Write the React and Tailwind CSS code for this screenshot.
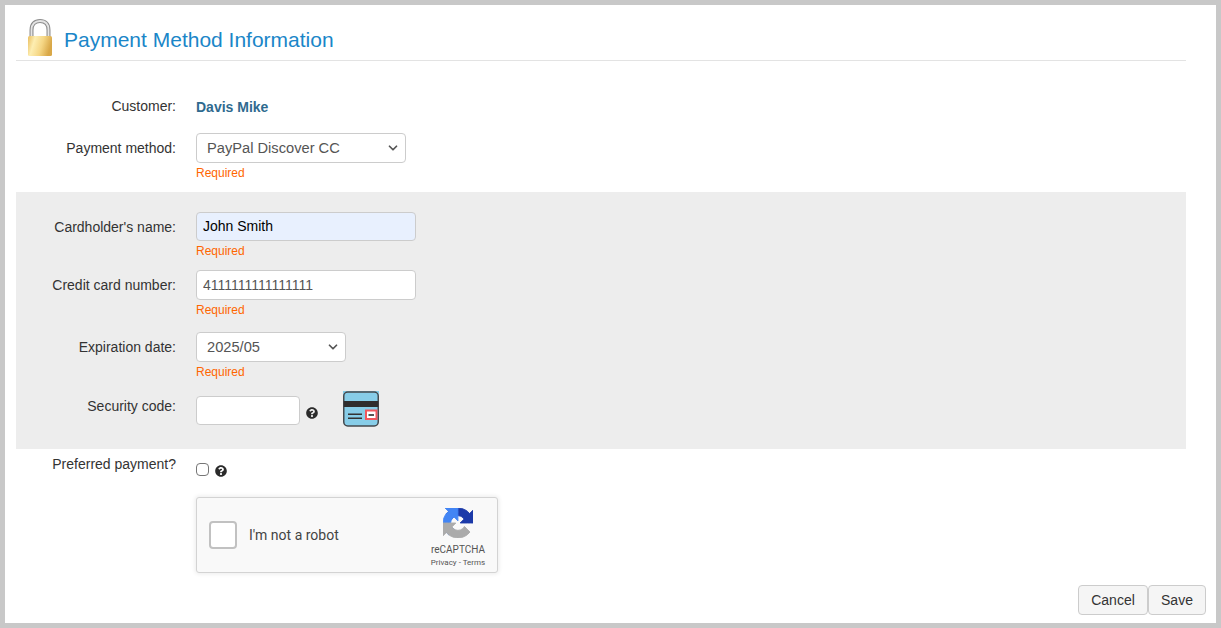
import { ChevronDown } from "lucide-react";
import { FaQuestionCircle } from "react-icons/fa";

const font = { fontFamily: '"Liberation Sans", Arial, sans-serif' };

function Lock() {
  return (
    <svg width="26" height="38" viewBox="0 0 26 38" className="shrink-0">
      <defs>
        <linearGradient id="lockBody" x1="0" y1="0" x2="1" y2="0.25">
          <stop offset="0" stopColor="#e9bd5e" />
          <stop offset="0.3" stopColor="#fdeeb2" />
          <stop offset="0.65" stopColor="#f5d684" />
          <stop offset="1" stopColor="#d9a848" />
        </linearGradient>
      </defs>
      <path d="M4.500 18V11C4.500 5 8 2 13 2s8.500 3 8.500 9v7" fill="none" stroke="#8d8d8d" strokeWidth="4" />
      <path d="M4.500 18V11C4.500 5 8 2 13 2s8.500 3 8.500 9v7" fill="none" stroke="#e4e4e4" strokeWidth="1.800" />
      <rect x="1" y="17" width="24" height="20" rx="1.500" fill="url(#lockBody)" />
    </svg>
  );
}

function Help() {
  return <FaQuestionCircle size={12} className="text-[#2b2b2b]" />;
}

function CardIcon() {
  return (
    <svg width="36" height="36" viewBox="0 0 36 36" className="shrink-0">
      <rect width="36" height="12" fill="#87cde8" />
      <rect x="0.750" y="1" width="34.500" height="34" rx="4" fill="#87cde8" stroke="#454a4e" strokeWidth="1.500" />
      <rect x="0.750" y="10" width="34.500" height="6" fill="#2f2d2d" />
      <rect x="5" y="22.500" width="14" height="1.500" fill="#333" />
      <rect x="5" y="26.500" width="14" height="1.500" fill="#333" />
      <rect x="23" y="19.500" width="10.500" height="8.500" fill="#fff" stroke="#f0565c" strokeWidth="2" />
      <rect x="25.500" y="23" width="5.500" height="2" fill="#555" />
    </svg>
  );
}

function RecaptchaLogo() {
  return (
    <svg width="30" height="30" viewBox="0 0 64 64">
      <path d="M64 31.955l-.033-1.37V4.687l-7.16 7.16C50.948 4.674 42.033.093 32.05.093c-10.4 0-19.622 4.96-25.458 12.64l11.736 11.86a15.55 15.55 0 0 1 4.754-5.334c2.05-1.6 4.952-2.906 8.968-2.906.485 0 .86.057 1.135.163 4.976.393 9.29 3.14 11.83 7.124l-8.307 8.307c10.522-.04 22.41-.066 27.295 0" fill="#1c3aa9" stroke="#1c3aa9" strokeWidth="2" />
      <path d="M31.862.094l-1.37.033H4.594l7.16 7.16C4.58 13.147 0 22.06 0 32.046c0 10.4 4.96 19.622 12.64 25.458l11.86-11.736a15.55 15.55 0 0 1-5.334-4.754c-1.6-2.05-2.906-4.952-2.906-8.968 0-.485.057-.86.163-1.135.393-4.976 3.14-9.29 7.124-11.83l8.307 8.307c-.04-10.522-.066-22.41 0-27.295" fill="#4285f4" stroke="#4285f4" strokeWidth="2" />
      <path d="M.001 32.045l.033 1.37v25.898l7.16-7.160c5.86 7.173 14.774 11.754 24.76 11.754 10.4 0 19.622-4.96 25.458-12.64l-11.736-11.86a15.55 15.55 0 0 1-4.754 5.334c-2.05 1.6-4.952 2.906-8.968 2.906-.485 0-.86-.057-1.135-.163-4.976-.393-9.29-3.14-11.83-7.124l8.307-8.307c-10.522.04-22.41.066-27.295 0" fill="#ababab" stroke="#ababab" strokeWidth="2" />
    </svg>
  );
}

function Row({ label, children, className = "", labelClass = "" }) {
  return (
    <div className={`grid grid-cols-[160px_1fr] gap-x-5 ${className}`}>
      <div className={`text-right text-sm text-[#333] ${labelClass}`}>{label}</div>
      <div>{children}</div>
    </div>
  );
}

function Required() {
  return <div className="mt-[3px] text-xs leading-[14px] text-[#ff6600]">Required</div>;
}

function Select({ value, width }) {
  return (
    <div className={`relative h-[30px] rounded border border-[#ccc] bg-white ${width}`}>
      <select
        defaultValue={value}
        className="h-full w-full appearance-none bg-transparent pl-[10px] text-[14.67px] text-[#555] outline-none"
      >
        <option>{value}</option>
      </select>
      <ChevronDown size={14} strokeWidth={3} className="absolute right-[5px] top-[7px] text-[#555]" />
    </div>
  );
}

export default function App() {
  return (
    <div style={font} className="h-[628px] w-full overflow-hidden border-[5px] border-[#c8c8c8] bg-white">
      <div className="ml-[11px] mr-[30px]">
        {/* Title */}
        <div className="flex h-[56px] items-end gap-[11px] border-b border-[#e3e3e3] pb-[3px] pl-[11px]">
          <Lock />
          <h1 className="pb-[3px] text-[21px] leading-7 text-[#1a86c8]">Payment Method Information</h1>
        </div>

        <Row label="Customer:" className="mt-[35px]" labelClass="leading-5">
          <div className="pt-px text-sm font-bold leading-5 text-[#2f6a8f]">Davis Mike</div>
        </Row>

        <Row label="Payment method:" className="mt-[16px]" labelClass="leading-[30px]">
          <Select value="PayPal Discover CC" width="w-[210px]" />
          <Required />
        </Row>

        {/* Card details */}
        <div className="mt-[12px] h-[257px] bg-[#ededed] pt-[20px]">
          <Row label="Cardholder's name:" labelClass="leading-[31px]">
            <input
              readOnly
              value="John Smith"
              className="block h-[29px] w-[220px] rounded border border-[#ccc] bg-[#e8f0fe] px-[6px] pb-[2px] text-sm text-black outline-none"
            />
            <Required />
          </Row>
          <Row label="Credit card number:" className="mt-[12px]" labelClass="leading-[31px]">
            <input
              readOnly
              value="4111111111111111"
              className="block h-[30px] w-[220px] rounded border border-[#ccc] bg-white px-[6px] text-sm text-[#555] outline-none"
            />
            <Required />
          </Row>
          <Row label="Expiration date:" className="mt-[15px]" labelClass="leading-[30px]">
            <Select value="2025/05" width="w-[150px]" />
            <Required />
          </Row>
          <Row label="Security code:" className="mt-[12px]" labelClass="leading-[31px]">
            <div className="flex items-start">
              <input className="mt-[5px] h-[29px] w-[104px] rounded border border-[#ccc] bg-white outline-none" />
              <span className="ml-[6px] mt-[16px]"><Help /></span>
              <span className="ml-[25px]"><CardIcon /></span>
            </div>
          </Row>
        </div>

        <Row label="Preferred payment?" className="mt-[6px]" labelClass="leading-[18px]">
          <div className="flex h-[30px] items-center">
            <span className="mb-[2px] h-[13px] w-[13px] rounded-sm border border-[#767676] bg-white" />
            <span className="ml-[6px] mt-[2px]"><Help /></span>
          </div>
        </Row>

        <Row label="" className="mt-[12px]">
          <div className="flex h-[76px] w-[302px] items-center rounded-[3px] border border-[#d3d3d3] bg-[#f9f9f9] pl-3 shadow-[0_0_4px_1px_rgba(0,0,0,0.08)]">
            <span className="h-7 w-7 rounded-sm border-2 border-[#c1c1c1] bg-white" />
            <span className="ml-3 text-sm text-[#444]" style={{ fontFamily: "Roboto, sans-serif" }}>I'm not a robot</span>
            <div className="ml-auto mr-[9px] flex w-[60px] flex-col items-center self-start pt-[10px] text-[#555]" style={{ fontFamily: "Roboto, sans-serif" }}>
              <RecaptchaLogo />
              <div className="mt-[6px] text-[10px] leading-[12px]">reCAPTCHA</div>
              <div className="mt-[1px] text-[8px] leading-[11px]">Privacy - Terms</div>
            </div>
          </div>
        </Row>
      </div>

      {/* Actions */}
      <div className="mr-[10px] mt-[12px] flex justify-end">
        <button className="h-[30px] w-[70px] rounded border border-[#ccc] bg-[#f5f5f5] text-sm text-[#333]">Cancel</button>
        <button className="h-[30px] w-[58px] rounded border border-[#ccc] bg-[#f5f5f5] text-sm text-[#333]">Save</button>
      </div>
    </div>
  );
}
